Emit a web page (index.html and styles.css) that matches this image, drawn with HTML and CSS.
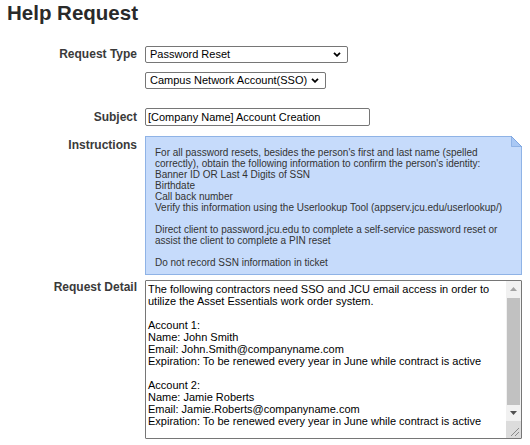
FILE: index.html
```html
<!DOCTYPE html>
<html>
<head>
<meta charset="utf-8">
<link rel="stylesheet" href="styles.css">
</head>
<body>
<div class="page">
  <h1 class="title">Help Request</h1>
  <div class="row row-type">
    <div class="label label-select">Request Type</div>
    <div class="stack">
      <span class="select-wrap">
        <select class="select select-type"><option>Password Reset</option></select>
        <svg class="chev" width="8" height="5" viewBox="0 0 8 5"><path d="M1 0.8 L4 3.8 L7 0.8" fill="none" stroke="#000" stroke-width="1.8"/></svg>
      </span>
      <span class="select-wrap">
        <select class="select select-acct"><option>Campus Network Account(SSO)</option></select>
        <svg class="chev" width="8" height="5" viewBox="0 0 8 5"><path d="M1 0.8 L4 3.8 L7 0.8" fill="none" stroke="#000" stroke-width="1.8"/></svg>
      </span>
    </div>
  </div>
  <div class="row row-subject">
    <div class="label label-input">Subject</div>
    <input class="input" type="text" value="[Company Name] Account Creation">
  </div>
  <div class="row row-instr">
    <div class="label label-instr">Instructions</div>
    <div class="note">
      <svg class="fold" width="11" height="11" viewBox="0 0 11 11">
        <polygon points="0,0 11,0 11,11" fill="#ffffff"/>
        <polygon points="0,0 11,11 0,11" fill="#a9c8f4"/>
        <path d="M0.5 0 L0.5 10.5 L11 10.5" fill="none" stroke="#8fb3e6" stroke-width="1"/>
        <path d="M0 0 L11 11" fill="none" stroke="#7ea6e2" stroke-width="1"/>
      </svg>
      <div class="note-text">For all password resets, besides the person's first and last name (spelled correctly), obtain the following information to confirm the person's identity:
Banner ID OR Last 4 Digits of SSN
Birthdate
Call back number
Verify this information using the Userlookup Tool (appserv.jcu.edu/userlookup/)

Direct client to password.jcu.edu to complete a self-service password reset or assist the client to complete a PIN reset

Do not record SSN information in ticket</div>
    </div>
  </div>
  <div class="row row-detail">
    <div class="label label-detail">Request Detail</div>
    <div class="detail">
      <textarea class="detail-text">The following contractors need SSO and JCU email access in order to utilize the Asset Essentials work order system.

Account 1:
Name: John Smith
Email: John.Smith@companyname.com
Expiration: To be renewed every year in June while contract is active

Account 2:
Name: Jamie Roberts
Email: Jamie.Roberts@companyname.com
Expiration: To be renewed every year in June while contract is active
</textarea>
      <div class="scrollbar">
        <div class="sb-btn"><svg width="7" height="4" viewBox="0 0 7 4"><polygon points="0,4 7,4 3.5,0" fill="#a3a3a3"/></svg></div>
        <div class="sb-track"><div class="sb-thumb"></div></div>
        <div class="sb-btn"><svg width="7" height="4" viewBox="0 0 7 4"><polygon points="0,0 7,0 3.5,4" fill="#505050"/></svg></div>
        <div class="sb-corner"><svg width="15" height="17" viewBox="0 0 15 17"><path d="M13 7 L5 15 M13 11 L9 15" stroke="#8a8a8a" stroke-width="1"/></svg></div>
      </div>
    </div>
  </div>
</div>
</body>
</html>
```

FILE: styles.css
```css
html, body {
  margin: 0;
  padding: 0;
  background: #ffffff;
}

.page {
  padding: 1px 0 0 7px;
  font-family: "Liberation Sans", Arial, sans-serif;
  color: #333333;
}

.title {
  margin: 0;
  font-size: 20.5px;
  line-height: 23px;
  font-weight: bold;
  color: #2a2a2a;
}

.row {
  display: flex;
  align-items: flex-start;
  gap: 8px;
}

.label {
  width: 130px;
  flex: none;
  text-align: right;
  font-size: 12px;
  font-weight: bold;
  color: #3a3a3a;
}

.label-select { line-height: 17px; }
.label-input { line-height: 18px; }
.label-instr { line-height: 18px; }
.label-detail { line-height: 15px; }

.row-type { margin-top: 22px; }
.row-subject { margin-top: 19px; }
.row-instr { margin-top: 10px; }
.row-detail { margin-top: 5px; }

.stack {
  display: flex;
  flex-direction: column;
  align-items: flex-start;
  gap: 9px;
}

.select-wrap {
  position: relative;
  display: block;
}

.select {
  -webkit-appearance: none;
  appearance: none;
  display: block;
  box-sizing: border-box;
  height: 17px;
  margin: 0;
  padding: 0 0 0 4px;
  border: 1px solid #767676;
  border-radius: 2px;
  background: #ffffff;
  font-family: "Liberation Sans", Arial, sans-serif;
  font-size: 11px;
  color: #000000;
  line-height: 15px;
}

.select-type { width: 203px; }
.select-acct { width: 181px; }

.chev {
  position: absolute;
  right: 7px;
  top: 6px;
}

.input {
  display: block;
  box-sizing: border-box;
  width: 225px;
  height: 18px;
  margin: 0;
  padding: 0 2px;
  border: 1px solid #767676;
  border-radius: 2px;
  font-family: "Liberation Sans", Arial, sans-serif;
  font-size: 11px;
  color: #000000;
}

.note {
  position: relative;
  box-sizing: border-box;
  width: 377px;
  height: 139px;
  border: 1px solid #8fb3e6;
  background: #c6dbfb;
  padding: 10px 9px 0 9px;
}

.fold {
  position: absolute;
  top: -1px;
  right: -1px;
}

.note-text {
  white-space: pre-line;
  font-size: 10px;
  line-height: 11px;
  color: #333333;
}

.detail {
  display: flex;
  box-sizing: border-box;
  width: 377px;
  height: 159px;
  border: 1px solid #767676;
  border-radius: 1px;
  background: #ffffff;
}

.detail-text {
  flex: 1;
  min-width: 0;
  margin: 0;
  border: none;
  outline: none;
  resize: none;
  overflow: hidden;
  padding: 2px 2px;
  font-family: "Liberation Sans", Arial, sans-serif;
  font-size: 11px;
  line-height: 12px;
  color: #000000;
  background: transparent;
}

.scrollbar {
  width: 15px;
  flex: none;
  display: flex;
  flex-direction: column;
  background: #f1f1f1;
}

.sb-btn {
  height: 16px;
  display: flex;
  align-items: center;
  justify-content: center;
}

.sb-track {
  flex: 1;
  padding: 1px 1px 0 1px;
  display: flex;
}

.sb-thumb {
  flex: 1;
  background: #c1c1c1;
}

.sb-corner {
  height: 17px;
  background: #dcdcdc;
  display: flex;
}
```
